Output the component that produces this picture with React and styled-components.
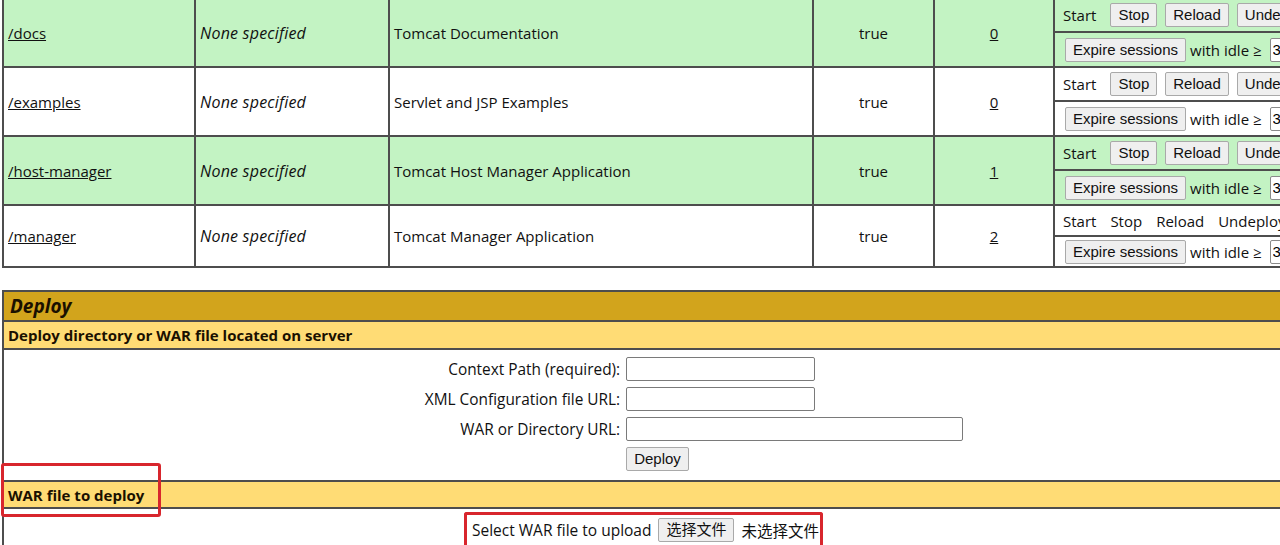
import React from "react";

import styled, {createGlobalStyle} from "styled-components";

const Global = createGlobalStyle`
  html,body{
    margin:0;
    padding:0;
    background:#ffffff;
    overflow:hidden;
  }

  body{
    font-family:"Open Sans","Noto Sans",sans-serif;
    font-size:15px;
    color:#111;
  }
`;

const Page = styled.div`
  margin-top:-3px;

  padding-left:2px;

  width:1400px;
`;

const Grid = styled.table`
  width:1378px;

  table-layout:fixed;

  border-collapse:collapse;

  border:2px solid #4d4d4d;
`;

const Cell = styled.td`
  border:2px solid #4d4d4d;

  padding:0 4px;

  background:${p=>p.$green ? "#c3f3c3" : "#ffffff"};

  text-align:${p=>p.$center ? "center" : "left"};

  font-style:${p=>p.$italic ? "italic" : "normal"};

  font-size:${p=>p.$italic ? "16px" : "15px"};

  letter-spacing:${p=>p.$italic ? "0.2px" : "normal"};

  height:${p=>p.$h ? `${p.$h}px` : "auto"};

  box-sizing:border-box;

  white-space:nowrap;

  overflow:hidden;

  vertical-align:middle;
`;

const Link = styled.a`
  color:#111;

  text-decoration:underline;
`;

const Actions = styled.div`
  display:flex;

  align-items:center;

  gap:${p=>p.$gap || 8}px;

  padding-left:${p=>p.$indent || 0}px;

  white-space:nowrap;
`;

const Plain = styled.span`
  margin-right:6px;
`;

const Button = styled.button`
  font-family:"Liberation Sans",Arial,"Noto Sans CJK SC",sans-serif;

  font-size:15px;

  color:#111;

  background:#efefef;

  border:1px solid #a9a9a9;

  border-radius:2px;

  padding:0 7px;

  height:24px;

  line-height:20px;
`;

const IdleInput = styled.input`
  width:60px;

  height:22px;

  margin-left:4px;

  border:1px solid #8a8a8a;

  border-radius:2px;

  font-size:15px;

  padding:0 2px;
`;

const Title = styled.td`
  background:#d2a41c;

  border:2px solid #4d4d4d;

  height:28px;

  padding:0 6px;

  font-size:19px;

  font-weight:700;

  font-style:italic;

  color:#1a1000;
`;

const Sub = styled.td`
  position:relative;

  background:#ffdc75;

  border:2px solid #4d4d4d;

  height:${p=>p.$h}px;

  padding:0 4px;

  font-weight:700;

  font-size:15px;

  color:#1a1000;
`;

const Body = styled.td`
  border:2px solid #4d4d4d;

  border-right:none;

  padding:${p=>p.$pad};

  text-align:center;

  vertical-align:top;
`;

const Form = styled.div`
  display:grid;

  grid-template-columns:max-content 338px;

  column-gap:6px;

  row-gap:6px;

  justify-content:center;

  align-items:center;

  padding-left:6px;

  font-size:15.4px;
`;

const Label = styled.label`
  text-align:right;
`;

const Field = styled.input`
  width:${p=>p.$w}px;

  height:24px;

  box-sizing:border-box;

  border:1px solid #7a7a7a;

  border-radius:2px;
`;

const Left = styled.div`
  display:flex;
`;

const Marker = styled.div`
  position:absolute;

  left:-3px;

  top:-19px;

  width:154px;

  height:48px;

  border:3px solid #d8262d;

  border-radius:3px;

  pointer-events:none;
`;

const Upload = styled.div`
  display:inline-flex;

  align-items:center;

  gap:7px;

  margin-right:96px;

  padding:3px 1px 6px 5px;

  border:3px solid #d8262d;

  border-bottom:none;

  border-radius:3px 3px 0 0;

  font-family:"Open Sans","Noto Sans CJK SC",sans-serif;

  font-size:15.5px;
`;

const apps = [
  {path:"/docs",desc:"Tomcat Documentation",sessions:"0",green:true,h:[34,35]},
  {path:"/examples",desc:"Servlet and JSP Examples",sessions:"0",green:false,h:[34,35]},
  {path:"/host-manager",desc:"Tomcat Host Manager Application",sessions:"1",green:true,h:[34,35]},
  {path:"/manager",desc:"Tomcat Manager Application",sessions:"2",green:false,h:[31,31],plain:true}
];

function AppRows({app}){

  const g = app.green;

  return(
    <>
      <tr>
        <Cell $green={g} rowSpan={2}><Link href="#">{app.path}</Link></Cell>
        <Cell $green={g} $italic rowSpan={2}>None specified</Cell>
        <Cell $green={g} rowSpan={2}>{app.desc}</Cell>
        <Cell $green={g} $center rowSpan={2}>true</Cell>
        <Cell $green={g} $center rowSpan={2}><Link href="#">{app.sessions}</Link></Cell>
        <Cell $green={g} $h={app.h[0]}>
          {app.plain ? (
            <Actions $gap={14} $indent={4}>
              <span>Start</span><span>Stop</span><span>Reload</span><span>Undeploy</span>
            </Actions>
          ) : (
            <Actions $indent={4}>
              <Plain>Start</Plain>
              <Button>Stop</Button>
              <Button>Reload</Button>
              <Button>Undeploy</Button>
            </Actions>
          )}
        </Cell>
      </tr>
      <tr>
        <Cell $green={g} $h={app.h[1]}>
          <Actions $gap={4} $indent={6}>
            <Button>Expire sessions</Button>
            <span>with idle ≥</span>
            <IdleInput defaultValue="30" />
          </Actions>
        </Cell>
      </tr>
    </>
  );
}

export default function App(){

  return(

    <Page>

      <Global />

      <Grid>
        <colgroup>
          <col style={{width:"192px"}} />
          <col style={{width:"194px"}} />
          <col style={{width:"424px"}} />
          <col style={{width:"121px"}} />
          <col style={{width:"120px"}} />
          <col />
        </colgroup>
        <tbody>
          {apps.map(a=> <AppRows key={a.path} app={a} />)}
        </tbody>
      </Grid>

      <Grid style={{marginTop:"22px",borderRight:"none"}}>
        <tbody>
          <tr><Title>Deploy</Title></tr>
          <tr><Sub $h={26}>Deploy directory or WAR file located on server</Sub></tr>
          <tr>
            <Body $pad="7px 0 9px">
              <Form>
                <Label>Context Path (required):</Label>
                <Left><Field $w={189} /></Left>
                <Label>XML Configuration file URL:</Label>
                <Left><Field $w={189} /></Left>
                <Label>WAR or Directory URL:</Label>
                <Left><Field $w={337} /></Left>
                <span />
                <Left><Button>Deploy</Button></Left>
              </Form>
            </Body>
          </tr>
          <tr>
            <Sub $h={25}>
              WAR file to deploy
              <Marker />
            </Sub>
          </tr>
          <tr>
            <Body $pad="3px 0 0">
              <Upload>
                <span>Select WAR file to upload</span>
                <Button>选择文件</Button>
                <span>未选择文件</span>
              </Upload>
            </Body>
          </tr>
        </tbody>
      </Grid>

    </Page>
  );
}
